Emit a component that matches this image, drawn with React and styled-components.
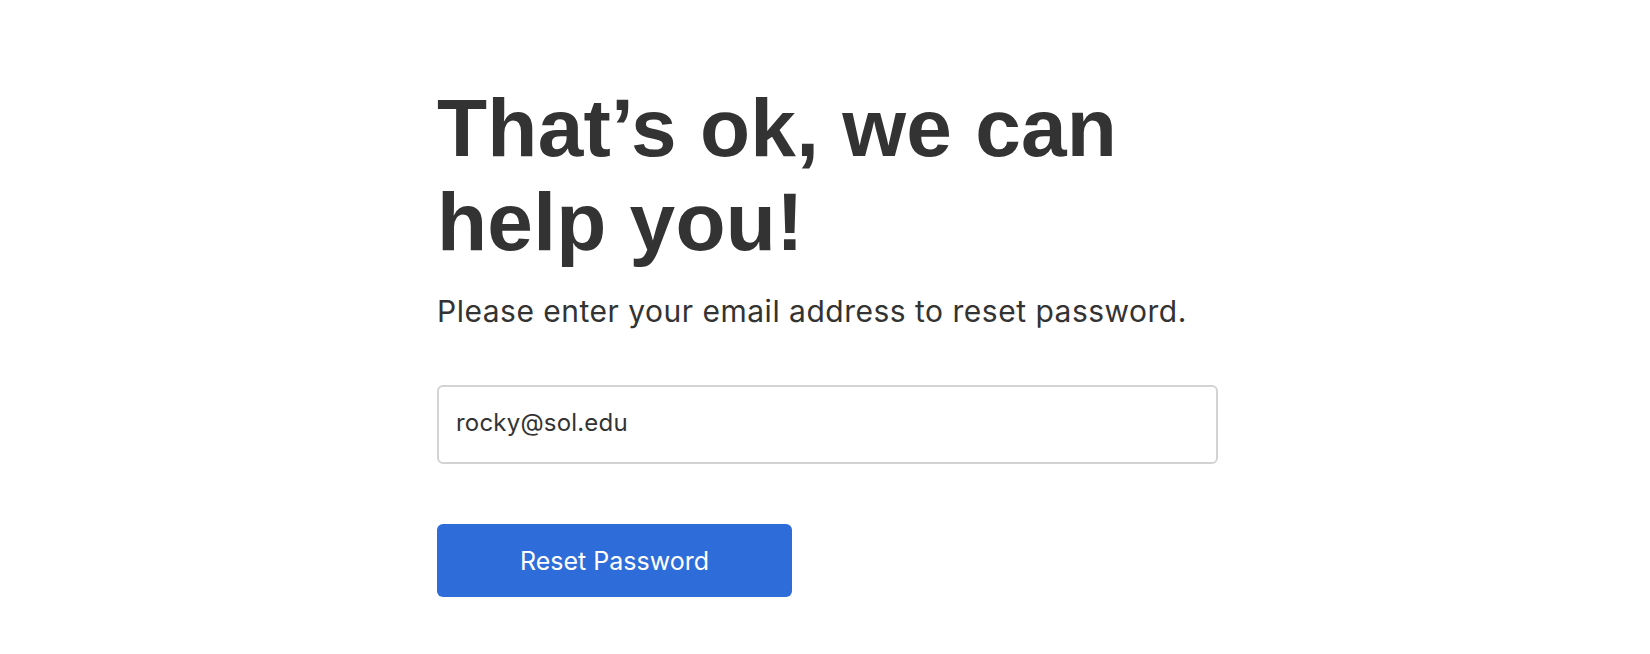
import React, { Component } from 'react';
import styled, { createGlobalStyle } from 'styled-components';

const GlobalStyle = createGlobalStyle`
    html, body {
        margin: 0;
        padding: 0;
        background: #ffffff;
    }

    body {
        font-family: Inter, "Liberation Sans", Arial, sans-serif;
        color: #333333;
    }
`;

const Page = styled.main`
    width: 100%;
    min-height: 654px;
    padding-top: 81px;
    box-sizing: border-box;
`;

const FormContainer = styled.form`
    width: 781px;
    margin-left: calc(50% - 388px);

    display: flex;
    flex-direction: column;
    align-items: flex-start;
`;

const Title = styled.h1`
    margin: 0;
    font-family: "Liberation Sans", Arial, sans-serif;
    font-weight: 700;
    font-size: 82px;
    line-height: 94px;
    letter-spacing: 0.25px;
    color: #333333;
`;

const Subtitle = styled.p`
    margin: 24px 0 0;
    font-size: 30px;
    line-height: 36px;
    letter-spacing: 0.5px;
    color: #333333;
`;

const EmailInput = styled.input`
    margin-top: 56px;
    width: 100%;
    height: 79px;
    box-sizing: border-box;
    padding: 0 17px 4px;

    border: 2px solid #d3d3d3;
    border-radius: 6px;
    background: #ffffff;
    outline: none;

    font-family: Inter, "Liberation Sans", Arial, sans-serif;
    font-size: 24px;
    letter-spacing: 0.2px;
    color: #333333;
`;

const SubmitButton = styled.button`
    margin-top: 60px;
    width: 355px;
    height: 73px;
    border: none;
    border-radius: 6px;
    background: ${props => props.color || '#2e6cd9'};
    cursor: pointer;

    font-family: Inter, "Liberation Sans", Arial, sans-serif;
    font-size: 25px;
    color: #ffffff;
`;

class App extends Component {
    render() {
        return (
            <Page>
                <GlobalStyle />
                <FormContainer onSubmit={e => e.preventDefault()}>
                    <Title>That’s ok, we can<br />help you!</Title>
                    <Subtitle>Please enter your email address to reset password.</Subtitle>
                    <EmailInput type="email" defaultValue="rocky@sol.edu" />
                    <SubmitButton type="submit">Reset Password</SubmitButton>
                </FormContainer>
            </Page>
        );
    }
}

export default App;
